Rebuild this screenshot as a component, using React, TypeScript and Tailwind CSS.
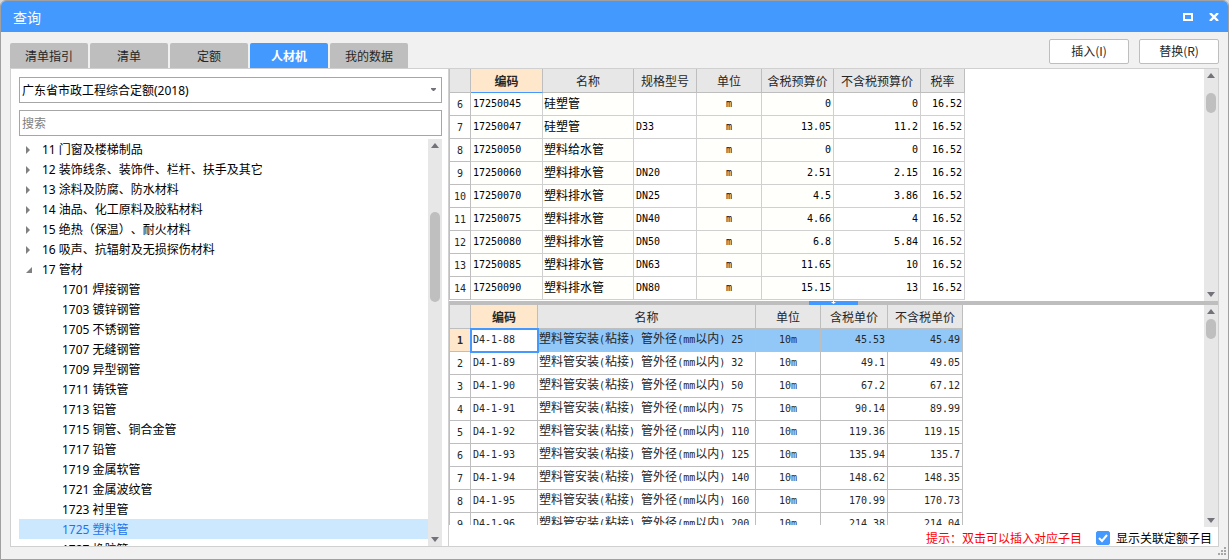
import React, { useState } from 'react';

const tabs = ['清单指引', '清单', '定额', '人材机', '我的数据'];

const groups = [
  '11 门窗及楼梯制品',
  '12 装饰线条、装饰件、栏杆、扶手及其它',
  '13 涂料及防腐、防水材料',
  '14 油品、化工原料及胶粘材料',
  '15 绝热（保温）、耐火材料',
  '16 吸声、抗辐射及无损探伤材料',
];

const pipes = [
  '1701 焊接钢管',
  '1703 镀锌钢管',
  '1705 不锈钢管',
  '1707 无缝钢管',
  '1709 异型钢管',
  '1711 铸铁管',
  '1713 铝管',
  '1715 铜管、铜合金管',
  '1717 铅管',
  '1719 金属软管',
  '1721 金属波纹管',
  '1723 衬里管',
  '1725 塑料管',
  '1727 橡胶管',
];

const materials = [
  { no: 6, code: '17250045', name: '硅塑管', spec: '', price: '0', net: '0' },
  { no: 7, code: '17250047', name: '硅塑管', spec: 'D33', price: '13.05', net: '11.2' },
  { no: 8, code: '17250050', name: '塑料给水管', spec: '', price: '0', net: '0' },
  { no: 9, code: '17250060', name: '塑料排水管', spec: 'DN20', price: '2.51', net: '2.15' },
  { no: 10, code: '17250070', name: '塑料排水管', spec: 'DN25', price: '4.5', net: '3.86' },
  { no: 11, code: '17250075', name: '塑料排水管', spec: 'DN40', price: '4.66', net: '4' },
  { no: 12, code: '17250080', name: '塑料排水管', spec: 'DN50', price: '6.8', net: '5.84' },
  { no: 13, code: '17250085', name: '塑料排水管', spec: 'DN63', price: '11.65', net: '10' },
  { no: 14, code: '17250090', name: '塑料排水管', spec: 'DN80', price: '15.15', net: '13' },
];

const quotas = [
  { code: 'D4-1-88', size: 25, price: '45.53', net: '45.49' },
  { code: 'D4-1-89', size: 32, price: '49.1', net: '49.05' },
  { code: 'D4-1-90', size: 50, price: '67.2', net: '67.12' },
  { code: 'D4-1-91', size: 75, price: '90.14', net: '89.99' },
  { code: 'D4-1-92', size: 110, price: '119.36', net: '119.15' },
  { code: 'D4-1-93', size: 125, price: '135.94', net: '135.7' },
  { code: 'D4-1-94', size: 140, price: '148.62', net: '148.35' },
  { code: 'D4-1-95', size: 160, price: '170.99', net: '170.73' },
  { code: 'D4-1-96', size: 200, price: '214.38', net: '214.04' },
];

const Mono: React.FC<{ children: React.ReactNode }> = ({ children }) => (
  <span className="font-['DejaVu_Sans_Mono',monospace] text-[10px] whitespace-pre">{children}</span>
);

// Latin runs use the narrow monospace, Chinese runs keep the table font
const MixedText: React.FC<{ text: string }> = ({ text }) => (
  <>
    {text.split(/([\x20-\x7e]+)/).map((part, i) =>
      /^[\x20-\x7e]/.test(part) ? <Mono key={i}>{part}</Mono> : part
    )}
  </>
);

const ScrollBar: React.FC<{ thumb: string }> = ({ thumb }) => (
  <div className="w-3.5 shrink-0 bg-[#e7e7e7] flex flex-col items-center justify-between py-1" aria-hidden="true">
    <div className="flex flex-col items-center">
      <svg width="8" height="5" viewBox="0 0 8 5"><path d="M0 5 L4 0 L8 5 Z" fill="#72727a" /></svg>
      <div className={`w-2.5 rounded-full bg-[#bfbfbf] ${thumb}`} />
    </div>
    <svg width="8" height="5" viewBox="0 0 8 5"><path d="M0 0 L4 5 L8 0 Z" fill="#72727a" /></svg>
  </div>
);

const HeadCell: React.FC<{ children?: React.ReactNode; active?: boolean; line?: string }> = ({ children, active, line = 'border-b-[#bebebe]' }) => (
  <th className={`h-6 p-0 border-r border-b border-r-[#bebebe] text-[#262626] ${line} ${active ? 'bg-[#ffe7cb] font-bold' : 'bg-[#e7e7e7] font-normal'}`}>
    {children}
  </th>
);

const App: React.FC = () => {
  const [tab, setTab] = useState('人材机');
  const [node, setNode] = useState('1725 塑料管');
  const [linked, setLinked] = useState(true);

  const matCell = 'h-[23px] pt-0 pb-0.5 border-r border-b border-[#d0d0d0]';
  const quotaCell = 'h-[23px] pt-0 pb-0.5 border-r border-b border-[#bebebe]';
  const noCell = 'h-[23px] p-0 border-r border-b border-[#bebebe] text-center text-[#262626]';

  return (
    <div className="bg-[#d9d9d9] font-['Noto_Sans_CJK_SC',sans-serif] text-xs leading-4 text-black [text-spacing-trim:space-all]">
      <div className="relative h-screen flex flex-col bg-[#f1f1f1] border border-[#a0a0a0] rounded-t-md overflow-hidden">
        <header className="h-[31px] shrink-0 bg-[#4499ff] flex items-center justify-between pl-3 pr-[9px]">
          <h1 className="text-sm text-white">查询</h1>
          <div className="flex items-center gap-4">
            <button aria-label="最大化" className="block">
              <svg width="10" height="8" viewBox="0 0 10 8"><rect x="1" y="1" width="8" height="6" fill="none" stroke="#fff" strokeWidth="2" /></svg>
            </button>
            <button aria-label="关闭" className="block">
              <svg width="10" height="8" viewBox="0 0 10 8"><path d="M1 0 L9 8 M9 0 L1 8" stroke="#fff" strokeWidth="2.4" /></svg>
            </button>
          </div>
        </header>

        <div className="h-9 shrink-0 flex justify-between px-[9px]">
          <nav className="flex items-end gap-0.5">
            {tabs.map((t) => (
              <button
                key={t}
                onClick={() => setTab(t)}
                className={`w-[78px] h-[25px] rounded-t-xs ${t === tab ? 'bg-[#4499ff] text-white font-bold' : 'bg-[#bebebe] text-[#262626]'}`}
              >
                {t}
              </button>
            ))}
          </nav>
          <div className="flex items-center gap-2.5 pb-1 pt-1.5">
            <button className="w-20 h-[25px] bg-white border border-[#bebebe] rounded-xs text-[#262626]">插入(I)</button>
            <button className="w-20 h-[25px] bg-white border border-[#bebebe] rounded-xs text-[#262626]">替换(R)</button>
          </div>
        </div>

        <main className="flex-1 min-h-0 flex mx-[9px] mb-3 bg-white border border-[#d0d0d0]">
          {/* Category tree */}
          <aside className="w-[437px] shrink-0 flex flex-col pt-2 pl-2 pr-1.5 font-['Noto_Sans','Noto_Sans_CJK_SC',sans-serif]">
            <div className="relative">
              <select aria-label="定额库" className="block w-full h-[26px] appearance-none bg-white border border-[#a6a6a6] px-0.5 pt-px">
                <option>广东省市政工程综合定额(2018)</option>
              </select>
              <svg className="absolute right-1.5 top-[11px] pointer-events-none" width="5" height="3" viewBox="0 0 5 3"><path d="M0 0 H5 V1 L3 3 H2 L0 1 Z" fill="#72727a" /></svg>
            </div>
            <input type="text" aria-label="搜索" placeholder="搜索" className="mt-[7px] w-full h-[26px] border border-[#a6a6a6] px-0.5 pt-px placeholder:text-[#808080]" />
            <div className="flex-1 min-h-0 flex mt-[3px]">
              <ul className="flex-1 min-w-0 overflow-hidden">
                {groups.map((g) => (
                  <li key={g}>
                    <button className="w-full h-5 flex items-center gap-3 pl-[7px] pt-0.5 text-left">
                      <svg width="4" height="8" viewBox="0 0 4 8"><path d="M0 0 L4 4 L0 8 Z" fill="#808080" /></svg>
                      {g}
                    </button>
                  </li>
                ))}
                <li>
                  <button className="w-full h-5 flex items-center gap-2.5 pl-[7px] pt-0.5 text-left">
                    <svg width="6" height="6" viewBox="0 0 6 6"><path d="M6 0 V6 H0 Z" fill="#808080" /></svg>
                    17 管材
                  </button>
                  <ul>
                    {pipes.map((p) => (
                      <li key={p}>
                        <button
                          onClick={() => setNode(p)}
                          className={`w-full h-5 pl-[43px] pt-0.5 text-left block ${p === node ? 'bg-[#cce8ff] text-[#1f74e8]' : ''}`}
                        >
                          {p}
                        </button>
                      </li>
                    ))}
                  </ul>
                </li>
              </ul>
              <ScrollBar thumb="mt-16 h-[90px]" />
            </div>
          </aside>

          <section className="flex-1 min-w-0 flex flex-col border-l border-[#d0d0d0]">
            {/* Materials */}
            <div className="flex-[232] min-h-0 flex">
              <div className="flex-1 min-w-0 overflow-hidden">
                <table className="w-[516px] table-fixed border-separate border-spacing-0 border-l border-[#bebebe] text-black">
                  <colgroup>
                    <col className="w-[21px]" />
                    <col className="w-[72px]" />
                    <col className="w-[91px]" />
                    <col className="w-[63px]" />
                    <col className="w-[65px]" />
                    <col className="w-[72px]" />
                    <col className="w-[87px]" />
                    <col className="w-11" />
                  </colgroup>
                  <thead>
                    <tr>
                      <HeadCell />
                      <HeadCell active line="border-b-[#4499ff]">编码</HeadCell>
                      <HeadCell>名称</HeadCell>
                      <HeadCell>规格型号</HeadCell>
                      <HeadCell>单位</HeadCell>
                      <HeadCell>含税预算价</HeadCell>
                      <HeadCell>不含税预算价</HeadCell>
                      <HeadCell>税率</HeadCell>
                    </tr>
                  </thead>
                  <tbody>
                    {materials.map((m) => (
                      <tr key={m.no}>
                        <td className={noCell}><Mono>{m.no}</Mono></td>
                        <td className={`${matCell} pl-0.5 bg-[#fffffb]`}><Mono>{m.code}</Mono></td>
                        <td className={`${matCell} pl-px bg-[#fffffb]`}>{m.name}</td>
                        <td className={`${matCell} pl-0.5`}><Mono>{m.spec}</Mono></td>
                        <td className={`${matCell} text-center bg-[#fffffb]`}><Mono>m</Mono></td>
                        <td className={`${matCell} pr-0.5 text-right bg-[#fffffb]`}><Mono>{m.price}</Mono></td>
                        <td className={`${matCell} pr-0.5 text-right`}><Mono>{m.net}</Mono></td>
                        <td className={`${matCell} pr-0.5 text-right`}><Mono>16.52</Mono></td>
                      </tr>
                    ))}
                  </tbody>
                </table>
              </div>
              <ScrollBar thumb="mt-[15px] h-5" />
            </div>

            <div className="h-1 shrink-0 bg-[#bebebe] flex justify-center">
              <button aria-label="折叠" className="w-[49px] h-1 bg-[#4499ff] flex justify-center">
                <svg width="5" height="3" viewBox="0 0 5 3"><path d="M0 1 H5 L2.5 3 Z M2 0 H3 V1 H2 Z" fill="#fff" /></svg>
              </button>
            </div>

            {/* Related quota items */}
            <div className="flex-[241] min-h-0 flex flex-col">
              <div className="flex-1 min-h-0 flex">
                <div className="flex-1 min-w-0 overflow-hidden border-b-2 border-white">
                  <table className="w-[514px] table-fixed border-separate border-spacing-0 border-l border-[#bebebe] text-[#262626]">
                    <colgroup>
                      <col className="w-[21px]" />
                      <col className="w-[67px]" />
                      <col className="w-[218px]" />
                      <col className="w-[65px]" />
                      <col className="w-[67px]" />
                      <col className="w-[75px]" />
                    </colgroup>
                    <thead>
                      <tr>
                        <HeadCell />
                        <HeadCell active>编码</HeadCell>
                        <HeadCell>名称</HeadCell>
                        <HeadCell>单位</HeadCell>
                        <HeadCell>含税单价</HeadCell>
                        <HeadCell>不含税单价</HeadCell>
                      </tr>
                    </thead>
                    <tbody>
                      {quotas.map((q, i) => (
                        <tr key={q.code} className={i === 0 ? 'bg-[#92c8f8]' : ''}>
                          <td className={`${noCell} ${i === 0 ? 'bg-[#ffe7cb] font-bold' : ''}`}><Mono>{i + 1}</Mono></td>
                          <td className={`${quotaCell} pl-0.5 ${i === 0 ? 'bg-white outline-2 outline-[#4499ff] -outline-offset-1' : ''}`}><Mono>{q.code}</Mono></td>
                          <td className={`${quotaCell} pl-px whitespace-nowrap overflow-hidden`}><MixedText text={`塑料管安装(粘接) 管外径(mm以内) ${q.size}`} /></td>
                          <td className={`${quotaCell} text-center`}><Mono>10m</Mono></td>
                          <td className={`${quotaCell} pr-0.5 text-right`}><Mono>{q.price}</Mono></td>
                          <td className={`${quotaCell} pr-0.5 text-right`}><Mono>{q.net}</Mono></td>
                        </tr>
                      ))}
                    </tbody>
                  </table>
                </div>
                <ScrollBar thumb="mt-[5px] h-5" />
              </div>
              <footer className="h-[19px] shrink-0 flex items-center justify-end gap-3.5 pr-1.5 pt-0.5">
                <p className="text-[#ff0000]">提示：双击可以插入对应子目</p>
                <label className="flex items-center gap-1.5">
                  <span className="relative block">
                    <input
                      type="checkbox"
                      checked={linked}
                      onChange={(e) => setLinked(e.target.checked)}
                      className="block size-3.5 appearance-none border border-[#4499ff] rounded-xs checked:bg-[#4499ff]"
                    />
                    {linked && (
                      <svg className="absolute inset-0 pointer-events-none" width="14" height="14" viewBox="0 0 14 14"><path d="M3 7 L6 10 L11 4" fill="none" stroke="#fff" strokeWidth="2" /></svg>
                    )}
                  </span>
                  显示关联定额子目
                </label>
              </footer>
            </div>
          </section>
        </main>

        <svg className="absolute right-0.5 bottom-1" width="8" height="8" viewBox="0 0 8 8" fill="#a6a6a6">
          <path d="M6 0h2v2H6z M3 3h2v2H3z M6 3h2v2H6z M0 6h2v2H0z M3 6h2v2H3z M6 6h2v2H6z" />
        </svg>
      </div>
    </div>
  );
};

export default App;
